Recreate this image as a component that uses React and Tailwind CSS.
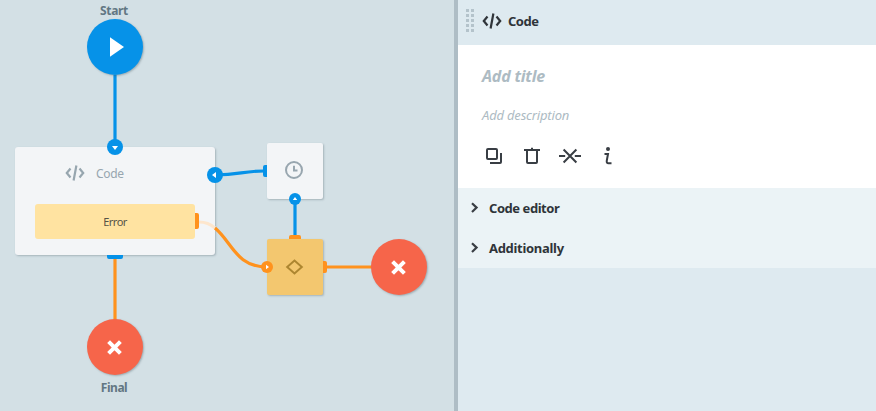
import React from "react";

function CodeIcon({ className }) {
  return (
    <svg className={className} width="20" height="16" viewBox="0 0 20 16" fill="none" stroke="currentColor" strokeWidth="2.2">
      <path d="M5.5 3.5L1.8 8L5.5 12.5M14.5 3.5L18.2 8L14.5 12.5M11.4 0.5L8.6 15.5" />
    </svg>
  );
}

function Terminal({ className, children }) {
  return (
    <div className={`absolute h-14 w-14 rounded-full shadow-[1px_1px_2px_rgba(60,80,90,0.35)] ${className}`}>
      <svg width="56" height="56" viewBox="0 0 56 56">{children}</svg>
    </div>
  );
}

function Cross() {
  return <path d="M21.6 22.6L33.4 34.4M33.4 22.6L21.6 34.4" stroke="#fff" strokeWidth="4" />;
}

const cardShadow = "shadow-[1px_1px_2px_rgba(60,80,90,0.3)]";

function Canvas() {
  return (
    <main className="relative h-full w-[454px] shrink-0 overflow-hidden bg-[#d3e0e5]">
      <div className={`absolute left-[15px] top-[147px] h-[108px] w-[200px] rounded-[3px] bg-[#f3f5f7] px-5 ${cardShadow}`}>
        <div className="flex h-[57px] items-center pb-[5px] pl-[30px] text-[#97a6af]">
          <CodeIcon />
          <span className="ml-[11px] pt-[2px] text-[12px] tracking-[-0.35px]">Code</span>
        </div>
        <div className="flex h-[35px] items-center justify-center rounded-[3px] bg-[#ffe3a1] pt-px text-[11px] tracking-[-0.5px] text-[#555346]">
          Error
        </div>
      </div>
      <div className={`absolute left-[267px] top-[143px] h-14 w-14 rounded-[2px] bg-[#f3f5f7] ${cardShadow}`}>
        <svg width="56" height="56" fill="none" stroke="#98a6af" strokeWidth="2">
          <circle cx="27" cy="27" r="8" />
          <path d="M27 22.8V27.5H30.5" />
        </svg>
      </div>
      <div className={`absolute left-[267px] top-[239px] h-14 w-14 rounded-[2px] bg-[#f3c76f] ${cardShadow}`}>
        <svg width="56" height="56" fill="none" stroke="#ad8630" strokeWidth="2">
          <path d="M20.2 28L27.5 21.5L34.8 28L27.5 34.5Z" />
        </svg>
      </div>

      <svg className="absolute inset-0" width="454" height="411" fill="none">
        <g stroke="#0692e8" strokeWidth="3.2">
          <path d="M115 75V147" />
          <path d="M215 175C240 175 242 171 264 171" />
          <path d="M295 199V236" />
        </g>
        <g stroke="#ff921d" strokeWidth="3.2">
          <path d="M115 258V320" />
          <path d="M199 222C205 222 210.5 224 215 228" stroke="#fde6cd" />
          <path d="M215 228C232 242 236 267 267 267" />
          <path d="M326 267H373" />
        </g>
        <path d="M107 255H123V257A2 2 0 0 1 121 259H109A2 2 0 0 1 107 257ZM267 165V177H265A2 2 0 0 1 263 175V167A2 2 0 0 1 265 165Z" fill="#0692e8" />
        <path d="M195 213H197A2 2 0 0 1 199 215V227A2 2 0 0 1 197 229H195ZM289 239V237A2 2 0 0 1 291 235H299A2 2 0 0 1 301 237V239ZM323 261H325A2 2 0 0 1 327 263V271A2 2 0 0 1 325 273H323Z" fill="#ff921d" />
        <g fill="#0692e8">
          <circle cx="115" cy="147" r="8" />
          <circle cx="215" cy="175" r="8" />
          <circle cx="295" cy="199" r="6" />
        </g>
        <circle cx="267" cy="267" r="6" fill="#ff921d" />
        <path d="M112 146H118L115 150ZM216 172V178L212 175ZM292.8 200H297.2L295 197ZM266 264.8V269.2L269 267Z" fill="#fff" />
      </svg>

      <Terminal className="left-[87px] top-[19px] bg-[#0692e8]">
        <path d="M23 18.2V37.8L37 28Z" fill="#fff" />
      </Terminal>
      <Terminal className="left-[87px] top-[319px] bg-[#f6654a]"><Cross /></Terminal>
      <Terminal className="left-[371px] top-[239px] bg-[#f6654a]"><Cross /></Terminal>
      <div className="absolute left-[64px] top-[3px] w-[100px] text-center text-[12px] font-bold leading-4 tracking-[-0.35px] text-[#627783]">Start</div>
      <div className="absolute left-[64px] top-[380px] w-[100px] text-center text-[12px] font-bold leading-4 tracking-[-0.45px] text-[#627783]">Final</div>
    </main>
  );
}

function Section({ title, tracking }) {
  return (
    <div className="flex h-10 items-center pl-[13px]">
      <svg width="8" height="12" viewBox="0 0 8 12" fill="none" stroke="#393e44" strokeWidth="2.2"><path d="M1 1.2L5.6 5.6L1 10" /></svg>
      <span className={`ml-[10px] pt-[2px] text-[13px] font-bold ${tracking}`}>{title}</span>
    </div>
  );
}

function Toolbar() {
  return (
    <div className="ml-[26px] flex">
      <svg width="20" height="20" fill="none" stroke="#393e44" strokeWidth="2">
        <rect x="3" y="3" width="10" height="10" rx="1" />
        <path d="M17 7V16A1 1 0 0 1 16 17H6" />
      </svg>
      <svg className="ml-[18px]" width="20" height="20" fill="none" stroke="#393e44" strokeWidth="2">
        <path d="M2 4H18M10 1.8V4M5 4V16A1 1 0 0 0 6 17H14A1 1 0 0 0 15 16V4" />
      </svg>
      <svg className="ml-4" width="24" height="20" viewBox="-2 0 24 20" fill="none" stroke="#393e44" strokeWidth="2">
        <path d="M3.6 3.5L16.4 16.5M16.4 3.5L3.6 16.5M-1 10H5.2M14.8 10H21" />
      </svg>
      <svg className="ml-[18px]" width="20" height="20" viewBox="2 0 20 20" fill="none" stroke="#393e44" strokeWidth="2">
        <circle cx="10" cy="3" r="2" fill="#393e44" stroke="none" />
        <path d="M6.5 8H10L8.8 14.5C8.4 16.5 9.2 17.2 10.4 17.2H13.5" />
      </svg>
    </div>
  );
}

const gripCells = Array.from({ length: 10 }, (_, i) => i);

export default function App() {
  return (
    <div className="flex h-[411px] w-[876px] overflow-hidden font-['Noto_Sans',sans-serif] text-[#2f3439]">
      <Canvas />
      <div className="w-1 shrink-0 bg-[#aebdc5]" />
      <aside className="flex min-w-0 flex-1 flex-col bg-[#deeaf0]">
        <header className="flex h-[45px] items-center pb-1 pl-2">
          <div className="grid grid-cols-2 gap-[2px]">
            {gripCells.map((i) => <i key={i} className="h-[3px] w-[3px] bg-[#b4c3cb]" />)}
          </div>
          <CodeIcon className="ml-[8px] text-[#30353a]" />
          <span className="ml-[6px] pt-[2px] text-[13px] font-bold tracking-[-0.5px]">Code</span>
        </header>
        <section className="flex h-[143px] flex-col bg-white">
          <div className="mt-5 pl-6 text-[16px] font-bold italic leading-[22px] tracking-[-0.2px] text-[#adbbc3]">Add title</div>
          <div className="mb-[22px] mt-[19px] pl-6 text-[13px] italic leading-[18px] tracking-[-0.18px] text-[#adbbc3]">Add description</div>
          <Toolbar />
        </section>
        <section className="bg-[#ebf3f6]">
          <Section title="Code editor" tracking="tracking-[-0.45px]" />
          <Section title="Additionally" tracking="tracking-[-0.3px]" />
        </section>
      </aside>
    </div>
  );
}
